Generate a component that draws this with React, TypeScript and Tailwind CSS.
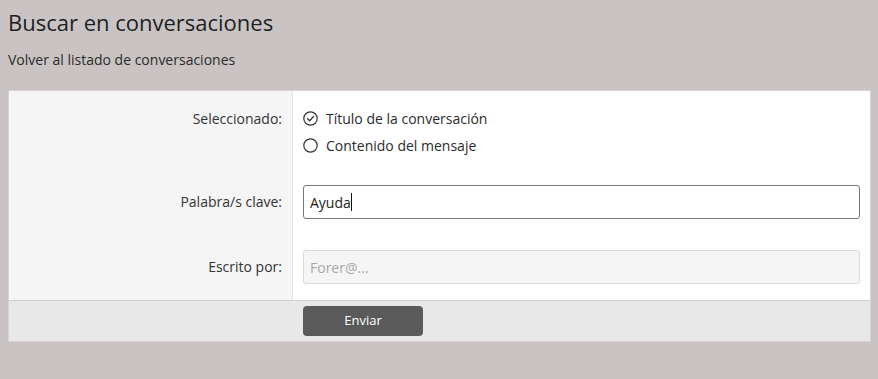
import React from "react";

const font = { fontFamily: '"Open Sans", "Noto Sans", sans-serif' };

function CheckCircle() {
  return (
    <svg width="15" height="15" viewBox="0 0 15 15" className="shrink-0">
      <circle cx="7.5" cy="7.5" r="6.7" fill="none" stroke="#333" strokeWidth="1.2" />
      <path d="M4.6 7.7 L6.7 9.7 L10.5 5.5" fill="none" stroke="#333" strokeWidth="1.3" strokeLinecap="round" strokeLinejoin="round" />
    </svg>
  );
}

function EmptyCircle() {
  return (
    <svg width="15" height="15" viewBox="0 0 15 15" className="shrink-0">
      <circle cx="7.5" cy="7.5" r="6.7" fill="none" stroke="#333" strokeWidth="1.2" />
    </svg>
  );
}

export default function App() {
  return (
    <div className="w-[878px] h-[379px] bg-[#c9c4c3] text-[#222] overflow-hidden" style={font}>
      <div className="pl-2 pt-[7px]">
        <h1 className="text-[22px] leading-[30px] text-[#1f1f1f] font-normal">Buscar en conversaciones</h1>
        <div className="mt-[14px] text-[14px] leading-[18px] text-[#2b2b2b]">Volver al listado de conversaciones</div>
      </div>
      <div className="ml-2 mt-[21px] w-[863px] bg-white border border-[#d8d4d3] rounded-[2px] overflow-hidden">
        {/* Row 1 */}
        <div className="grid grid-cols-[284px_1fr]">
          <div className="bg-[#f5f5f5] border-r border-[#e3e3e3] pt-[14px] pr-[10px] text-right text-[14px] leading-[27px] text-[#333]">
            Seleccionado:
          </div>
          <div className="pl-[10px] pt-[14px] text-[14px] text-[#2b2b2b]">
            <div className="flex items-center gap-[8px] h-[27px]">
              <CheckCircle />
              <span>Título de la conversación</span>
            </div>
            <div className="flex items-center gap-[8px] h-[27px]">
              <EmptyCircle />
              <span>Contenido del mensaje</span>
            </div>
          </div>
        </div>
        {/* Row 2 */}
        <div className="grid grid-cols-[284px_1fr]">
          <div className="bg-[#f5f5f5] border-r border-[#e3e3e3] pt-[26px] pr-[10px] text-right text-[14px] leading-[34px] text-[#333]">
            Palabra/s clave:
          </div>
          <div className="pl-[10px] pr-[10px] pt-[26px]">
            <div className="h-[34px] border border-[#777] rounded-[3px] flex items-center px-[6px] text-[14px] text-[#222]">
              Ayuda<span className="inline-block w-px h-[18px] bg-[#111]" />
            </div>
          </div>
        </div>
        {/* Row 3 */}
        <div className="grid grid-cols-[284px_1fr]">
          <div className="bg-[#f5f5f5] border-r border-[#e3e3e3] pt-[31px] pb-[16px] pr-[10px] text-right text-[14px] leading-[34px] text-[#333]">
            Escrito por:
          </div>
          <div className="pl-[10px] pr-[10px] pt-[31px] pb-[16px]">
            <div className="h-[34px] border border-[#dadada] bg-[#f5f5f5] rounded-[3px] flex items-center px-[6px] text-[14px] text-[#a8a8a8]">
              Forer@...
            </div>
          </div>
        </div>
        {/* Footer */}
        <div className="grid grid-cols-[284px_1fr] bg-[#e8e8e8] border-t border-[#cfcfcf]">
          <div />
          <div className="pl-[10px] py-[5px]">
            <button className="w-[120px] h-[30px] rounded-[4px] bg-[#5a5a5a] text-white text-[13px]">Enviar</button>
          </div>
        </div>
      </div>
    </div>
  );
}
